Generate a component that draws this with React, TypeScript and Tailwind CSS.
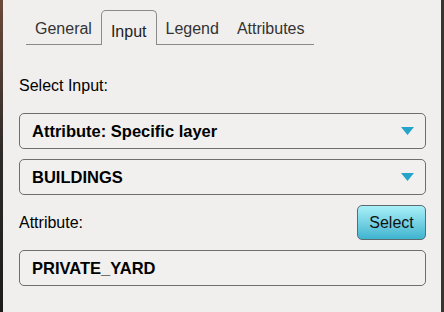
import { useState } from 'react'

const tabs = ['General', 'Input', 'Legend', 'Attributes']

function Caret() {
  return (
    <svg width="13" height="8" viewBox="0 0 13 8">
      <path d="M0 0 H13 L6.5 8 Z" fill="#25a4c9" />
    </svg>
  )
}

function Dropdown({ value }: { value: string }) {
  return (
    <div className="h-[36px] flex items-center justify-between pl-[12px] pr-[11px] border-[1.5px] border-[#6e6e6e] rounded-[5px] bg-[#f1f0ef]">
      <span className="text-[16.5px] font-bold text-black">{value}</span>
      <Caret />
    </div>
  )
}

export default function App() {
  const [active, setActive] = useState('Input')

  return (
    <div
      className="w-[444px] h-[312px] flex overflow-hidden"
      style={{ fontFamily: '"Liberation Sans", Arial, sans-serif' }}
    >
      <div className="w-[3px] bg-gradient-to-b from-[#6b4a3a] via-[#2d2a28] to-[#1e1c1b]" />
      <div className="flex-1 bg-[#f0efee] pl-4 pr-[15px] pt-[10px]">
        {/* tabs */}
        <div className="flex ml-[7px]">
          {tabs.map((t) =>
            t === active ? (
              <button
                key={t}
                onClick={() => setActive(t)}
                className="h-[35px] px-[9px] pt-[8px] flex items-center border border-b-0 border-[#8a8a8a] rounded-t-[5px] text-[16px] text-[#222]"
              >
                {t}
              </button>
            ) : (
              <button
                key={t}
                onClick={() => setActive(t)}
                className="h-[35px] px-[9px] pt-[3px] flex items-center border-b-[1.5px] border-[#8a8a8a] text-[16px] text-[#333]"
              >
                {t}
              </button>
            )
          )}
        </div>

        <div className="mt-[32px] text-[16px] text-black leading-[18px]">Select Input:</div>

        <div className="mt-[18px] flex flex-col gap-[10px]">
          <Dropdown value="Attribute: Specific layer" />
          <Dropdown value="BUILDINGS" />
        </div>

        <div className="mt-[10px] flex items-center justify-between">
          <span className="text-[16px] text-black">Attribute:</span>
          <button className="w-[69px] h-[35px] rounded-[5px] border-[1.5px] border-[#5e6a6e] bg-gradient-to-b from-[#a8f0f8] to-[#3cb4cf] text-[16px] text-[#111]">
            Select
          </button>
        </div>

        <div className="mt-[10px] h-[36px] flex items-center pl-[12px] border-[1.5px] border-[#6e6e6e] rounded-[5px] bg-[#f1f0ef]">
          <span className="text-[16.5px] font-bold text-black">PRIVATE_YARD</span>
        </div>
      </div>
      <div className="w-[3px] bg-[#3a3230]" />
    </div>
  )
}
